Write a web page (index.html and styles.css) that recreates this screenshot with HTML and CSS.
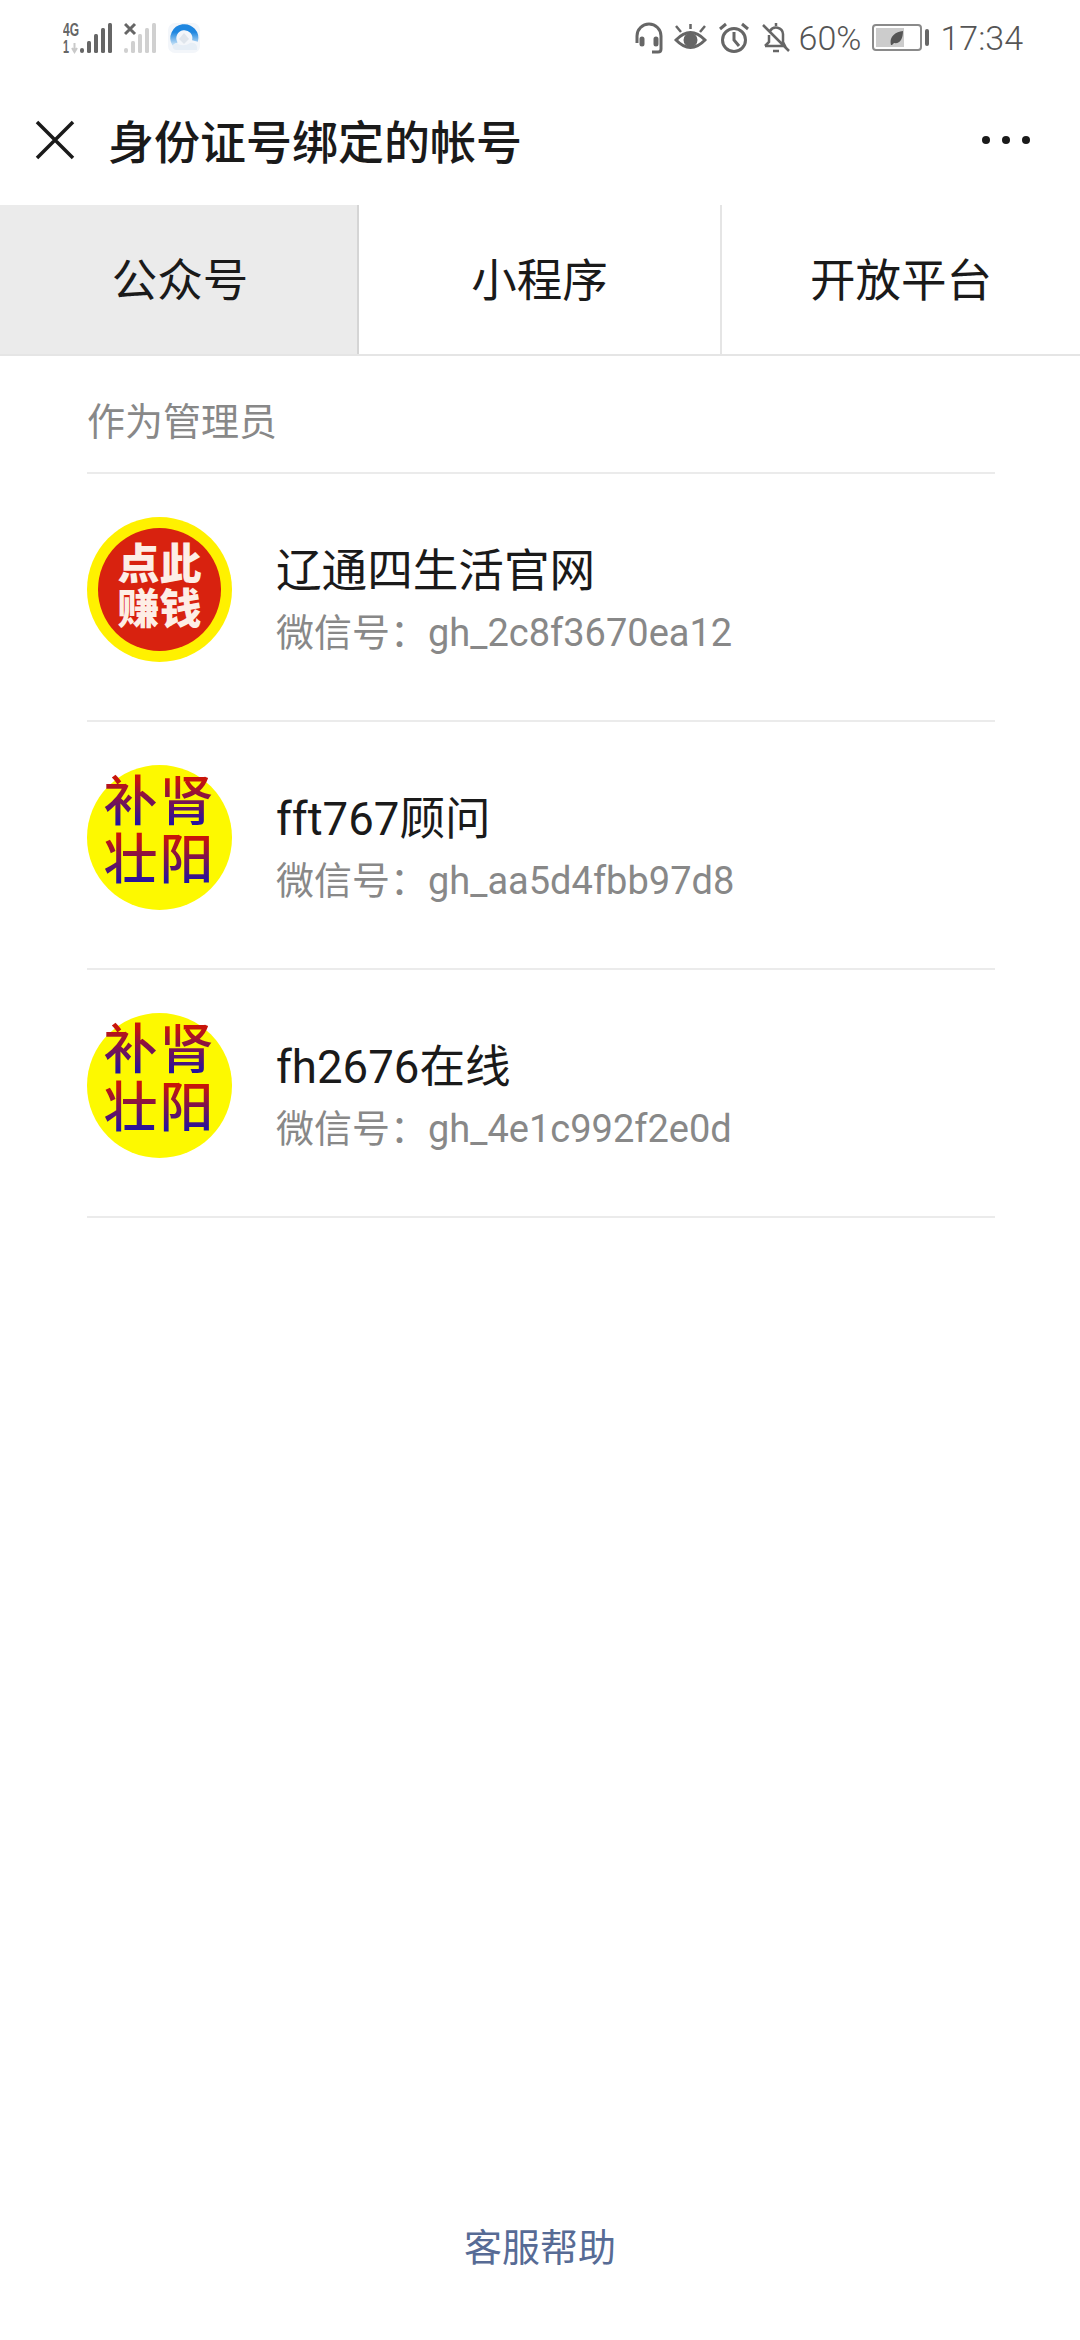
FILE: index.html
```html
<!DOCTYPE html>
<html lang="zh-CN">
<head>
    <meta charset="UTF-8">
    <meta name="viewport" content="width=device-width, initial-scale=1.0">
    <title>身份证号绑定的帐号</title>
    <link rel="stylesheet" href="styles.css">
</head>
<body>
    <div class="status-bar">
        <div class="status-left">
            <svg width="50" height="40" viewBox="0 -4 50 40">
                <text x="0" y="14" class="signal-text" textLength="16" lengthAdjust="spacingAndGlyphs">4G</text>
                <text x="0" y="31" class="signal-text" textLength="6" lengthAdjust="spacingAndGlyphs">1</text>
                <path d="M11.500 21v8M9 26l2.500 4 2.500-4" stroke="#c9c9c9" stroke-width="2" fill="none"/>
                <rect x="17" y="26" width="4" height="5" rx="2" fill="#666"/>
                <rect x="24" y="19" width="4" height="12" rx="1.500" fill="#666"/>
                <rect x="31" y="12" width="4" height="19" rx="1.500" fill="#666"/>
                <rect x="38" y="6" width="4" height="25" rx="1.500" fill="#666"/>
                <rect x="45" y="1" width="4" height="30" rx="1.500" fill="#666"/>
            </svg>
            <svg width="33" height="32" viewBox="0 0 33 32">
                <path d="M1 2l10 10M11 2L1 12" stroke="#666" stroke-width="3"/>
                <rect x="0" y="26" width="4" height="5" rx="2" fill="#d0d0d0"/>
                <rect x="7" y="19" width="4" height="12" rx="1.500" fill="#d0d0d0"/>
                <rect x="14" y="12" width="4" height="19" rx="1.500" fill="#d0d0d0"/>
                <rect x="21" y="6" width="4" height="25" rx="1.500" fill="#d0d0d0"/>
                <rect x="28" y="1" width="4" height="30" rx="1.500" fill="#d0d0d0"/>
            </svg>
            <svg width="32" height="32" viewBox="0 0 32 32">
                <defs>
                    <linearGradient id="arcFade" x1="0" y1="0" x2="0" y2="1">
                        <stop offset="0.300" stop-color="#1f87e0"/>
                        <stop offset="1" stop-color="#bcdcf5"/>
                    </linearGradient>
                </defs>
                <rect x="0" y="1" width="32" height="30" rx="7" fill="#f3f6fa"/>
                <path d="M7 22a11 11 0 1 1 20 -3" fill="none" stroke="url(#arcFade)" stroke-width="6"/>
                <path d="M16 11l5 6-5 5-5-5z" fill="#dfe5ec"/>
                <path d="M8 28c-5-1-4-7 1-7 3 3 9 3 13 0 5-1 8 2 7 7z" fill="#e6eef6"/>
            </svg>
        </div>
        <div class="status-right">
            <svg class="icon-headset" width="28" height="32" viewBox="0 0 28 32" fill="none" stroke="#666" stroke-width="3">
                <path d="M2 21V14a12 12 0 0 1 24 0v13q0 3-3 3h-6"/>
                <rect x="6" y="16" width="2" height="7" rx="1" fill="#666"/>
                <rect x="20" y="16" width="2" height="7" rx="1" fill="#666"/>
            </svg>
            <svg class="icon-eye" width="33" height="28" viewBox="0 0 33 28" fill="none" stroke="#666" stroke-width="3">
                <path d="M2 16q14.500-15 29 0q-14.500 15-29 0z"/>
                <circle cx="16.500" cy="16" r="5.500" fill="#666"/>
                <path d="M2 2l5 6M16.500 0v5M31 2l-5 6" stroke-width="2.500"/>
            </svg>
            <svg class="icon-alarm" width="30" height="31" viewBox="0 0 30 31" fill="none" stroke="#666" stroke-width="3">
                <circle cx="15" cy="18" r="11.500"/>
                <path d="M15 10v8l5 6M1 7l6-5M29 7l-6-5"/>
            </svg>
            <svg class="icon-bell" width="28" height="31" viewBox="0 0 28 31" fill="none" stroke="#666" stroke-width="2.500">
                <path d="M3 24h20l-2-4v-8a7 7 0 0 0-13-3M7 13v7l-4 4M11 29h6M14 1v3M1 3l26 26"/>
            </svg>
            <span class="status-text">60%</span>
            <div class="battery">
                <div class="battery-body">
                    <div class="battery-fill">
                        <svg width="14" height="16" viewBox="0 0 14 16"><path d="M1 15c-2-7 3-13 12-14 0 8-3 13-9 12l-2 2z" fill="#555"/></svg>
                    </div>
                </div>
                <div class="battery-cap"></div>
            </div>
            <span class="status-text status-time">17:34</span>
        </div>
    </div>

    <div class="top-bar">
        <svg class="close-icon" width="40" height="40" viewBox="0 0 40 40">
            <path d="M2 2l36 36M38 2L2 38" stroke="#1a1a1a" stroke-width="3.500"/>
        </svg>
        <div class="page-title">身份证号绑定的帐号</div>
        <div class="more-dots">
            <span></span><span></span><span></span>
        </div>
    </div>

    <div class="tabs">
        <div class="tab tab-active">公众号</div>
        <div class="tab">小程序</div>
        <div class="tab">开放平台</div>
    </div>

    <div class="content">
        <div class="section-label">作为管理员</div>

        <div class="account-row">
            <div class="avatar avatar-red">
                <div class="avatar-inner">点此<br>赚钱</div>
            </div>
            <div class="account-info">
                <div class="account-name">辽通四生活官网</div>
                <div class="account-id">微信号：<span class="account-code">gh_2c8f3670ea12</span></div>
            </div>
        </div>

        <div class="account-row">
            <div class="avatar avatar-yellow">
                <div class="gradient-line">补肾</div>
                <div class="gradient-line">壮阳</div>
            </div>
            <div class="account-info">
                <div class="account-name">fft767顾问</div>
                <div class="account-id">微信号：<span class="account-code">gh_aa5d4fbb97d8</span></div>
            </div>
        </div>

        <div class="account-row">
            <div class="avatar avatar-yellow">
                <div class="gradient-line">补肾</div>
                <div class="gradient-line">壮阳</div>
            </div>
            <div class="account-info">
                <div class="account-name">fh2676在线</div>
                <div class="account-id">微信号：<span class="account-code">gh_4e1c992f2e0d</span></div>
            </div>
        </div>
    </div>

    <div class="footer-link">客服帮助</div>
</body>
</html>
```

FILE: styles.css
```css
* {
    box-sizing: border-box;
}
body {
    margin: 0;
    width: 1080px;
    height: 2340px;
    display: flex;
    flex-direction: column;
    background-color: #fff;
    color: #1a1a1a;
    font-family: Roboto, "Noto Sans CJK SC", sans-serif;
}

/* status bar */
.status-bar {
    height: 75px;
    display: flex;
    justify-content: space-between;
    align-items: center;
    padding: 0 57px 0 63px;
}
.status-left {
    display: flex;
    align-items: center;
    gap: 11px;
}
.status-right {
    display: flex;
    align-items: center;
}
.icon-eye {
    margin-left: 11px;
}
.icon-alarm {
    margin-left: 12px;
}
.icon-bell {
    margin-left: 13px;
}
.signal-text {
    font-family: "Liberation Sans", sans-serif;
    font-size: 18px;
    font-weight: bold;
    fill: #666;
}
.status-text {
    margin-left: 9px;
    font-size: 34px;
    font-weight: 300;
    color: #555;
}
.status-time {
    margin-left: 11px;
}
.battery {
    display: flex;
    align-items: center;
    gap: 3px;
    margin-left: 11px;
}
.battery-body {
    width: 50px;
    height: 27px;
    padding: 2px;
    border: 2px solid #8a8a8a;
    border-radius: 4px;
}
.battery-fill {
    width: 65%;
    height: 100%;
    display: flex;
    align-items: center;
    justify-content: flex-end;
    background-color: #ccc;
}
.battery-cap {
    width: 4px;
    height: 17px;
    background-color: #666;
    border-radius: 2px;
}

/* top bar */
.top-bar {
    height: 130px;
    display: flex;
    align-items: center;
    padding: 0 50px 0 35px;
}
.close-icon {
    margin-right: 33px;
}
.page-title {
    flex: 1;
    padding-bottom: 3px;
    font-size: 46px;
    font-weight: 500;
}
.more-dots {
    display: flex;
    gap: 12px;
}
.more-dots span {
    width: 8px;
    height: 8px;
    border-radius: 50%;
    background-color: #1a1a1a;
}

/* tabs */
.tabs {
    height: 151px;
    display: grid;
    grid-template-columns: 359px 363px 1fr;
    border-bottom: 2px solid #e5e5e5;
}
.tab {
    display: flex;
    align-items: center;
    justify-content: center;
    padding-bottom: 6px;
    font-size: 45.500px;
    border-right: 2px solid #e5e5e5;
}
.tab:last-child {
    border-right: none;
}
.tab-active {
    padding-left: 3px;
    background-color: #ebebeb;
    border-right-color: #d5d5d5;
}

/* accounts */
.content {
    flex: 1;
    padding: 0 85px 0 87px;
}
.section-label {
    height: 118px;
    padding-top: 41px;
    font-size: 38px;
    line-height: 50px;
    color: #888;
    border-bottom: 2px solid #ebebeb;
}
.account-row {
    height: 248px;
    display: flex;
    gap: 44px;
    padding-top: 43px;
    border-bottom: 2px solid #ebebeb;
}
.avatar {
    width: 145px;
    height: 145px;
    border-radius: 50%;
    flex-shrink: 0;
    display: flex;
    flex-direction: column;
    align-items: center;
    justify-content: center;
}
.avatar-red {
    padding: 11px;
    background-color: #fff100;
}
.avatar-inner {
    width: 100%;
    height: 100%;
    padding-bottom: 6px;
    border-radius: 50%;
    display: flex;
    flex-direction: column;
    align-items: center;
    justify-content: center;
    background-color: #d8220f;
    color: #fdeee6;
    font-size: 42px;
    font-weight: 900;
    line-height: 45px;
    text-align: center;
}
.avatar-yellow {
    padding-bottom: 12px;
    background-color: #fdf900;
}
.gradient-line {
    font-size: 54px;
    font-weight: 500;
    line-height: 58px;
    letter-spacing: 2px;
    background-image: linear-gradient(#c8140a 10%, #1b12a8 90%);
    -webkit-background-clip: text;
    background-clip: text;
    color: transparent;
}
.account-info {
    margin-top: 24px;
}
.account-name {
    font-size: 45.600px;
    line-height: 62px;
    color: #1a1a1a;
}
.account-id {
    margin-top: -1px;
    font-size: 38px;
    line-height: 62px;
    color: #888;
}
.account-code {
    font-size: 38px;
}

.footer-link {
    padding-bottom: 67px;
    text-align: center;
    font-size: 38px;
    line-height: 50px;
    color: #576b95;
}
```
